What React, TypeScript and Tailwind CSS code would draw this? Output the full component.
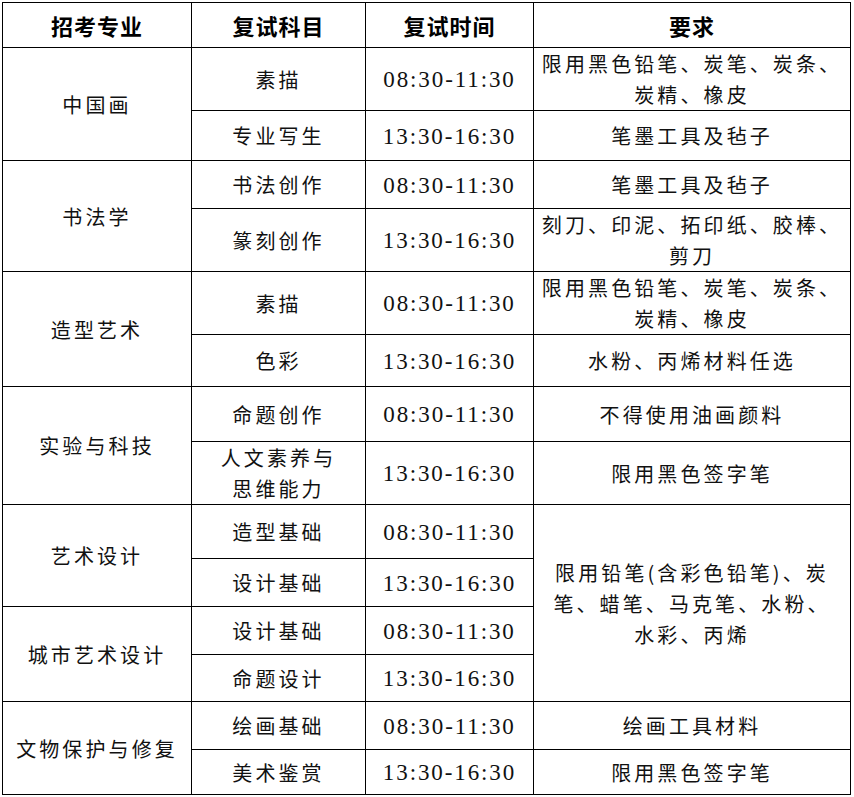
import React from 'react'

type Row = {
  major?: string
  majorSpan?: number
  subject: React.ReactNode
  time: string
  req?: React.ReactNode
  reqSpan?: number
  h: string
}

const rows: Row[] = [
  { major: '中国画', majorSpan: 2, subject: '素描', time: '08:30-11:30', req: <>限用黑色铅笔、炭笔、炭条、<br />炭精、橡皮</>, h: 'h-[62px]' },
  { subject: '专业写生', time: '13:30-16:30', req: '笔墨工具及毡子', h: 'h-[49px]' },
  { major: '书法学', majorSpan: 2, subject: '书法创作', time: '08:30-11:30', req: '笔墨工具及毡子', h: 'h-[47px]' },
  { subject: '篆刻创作', time: '13:30-16:30', req: <>刻刀、印泥、拓印纸、胶棒、<br />剪刀</>, h: 'h-[62px]' },
  { major: '造型艺术', majorSpan: 2, subject: '素描', time: '08:30-11:30', req: <>限用黑色铅笔、炭笔、炭条、<br />炭精、橡皮</>, h: 'h-[62px]' },
  { subject: '色彩', time: '13:30-16:30', req: '水粉、丙烯材料任选', h: 'h-[51px]' },
  { major: '实验与科技', majorSpan: 2, subject: '命题创作', time: '08:30-11:30', req: '不得使用油画颜料', h: 'h-[54px]' },
  { subject: <>人文素养与<br />思维能力</>, time: '13:30-16:30', req: '限用黑色签字笔', h: 'h-[62px]' },
  { major: '艺术设计', majorSpan: 2, subject: '造型基础', time: '08:30-11:30', req: <>限用铅笔(含彩色铅笔)、炭<br />笔、蜡笔、马克笔、水粉、<br />水彩、丙烯</>, reqSpan: 4, h: 'h-[53px]' },
  { subject: '设计基础', time: '13:30-16:30', h: 'h-[47px]' },
  { major: '城市艺术设计', majorSpan: 2, subject: '设计基础', time: '08:30-11:30', h: 'h-[47px]' },
  { subject: '命题设计', time: '13:30-16:30', h: 'h-[46px]' },
  { major: '文物保护与修复', majorSpan: 2, subject: '绘画基础', time: '08:30-11:30', req: '绘画工具材料', h: 'h-[47px]' },
  { subject: '美术鉴赏', time: '13:30-16:30', req: '限用黑色签字笔', h: 'h-[44px]' },
]

const cell = 'bg-white flex items-center justify-center text-center'
const cjk = "font-['Noto_Sans_CJK_SC',sans-serif] text-[20px] tracking-[3.1px] leading-[31px] text-[#111]"

export default function App() {
  return (
    <div className="bg-white min-h-screen p-[2px]">
      <div className="grid grid-cols-[188px_173px_167px_316px] gap-px bg-black p-px w-fit">
        {['招考专业', '复试科目', '复试时间', '要求'].map((t) => (
          <div key={t} className={`${cell} h-[44px] font-['Noto_Sans_CJK_SC',sans-serif] text-[22px] font-bold tracking-[1px] text-black`}>
            {t}
          </div>
        ))}
        {rows.map((r, i) => (
          <React.Fragment key={i}>
            {r.major && (
              <div className={`${cell} ${cjk} row-span-2`}>{r.major}</div>
            )}
            <div className={`${cell} ${cjk} ${r.h}`}>{r.subject}</div>
            <div className={`${cell} ${r.h} pt-[3px] font-['Liberation_Serif',serif] text-[23px] tracking-[1.9px] text-[#111]`}>
              {r.time}
            </div>
            {r.req && (
              <div className={`${cell} ${cjk} ${r.reqSpan === 4 ? 'row-span-4' : ''}`}>{r.req}</div>
            )}
          </React.Fragment>
        ))}
      </div>
    </div>
  )
}
